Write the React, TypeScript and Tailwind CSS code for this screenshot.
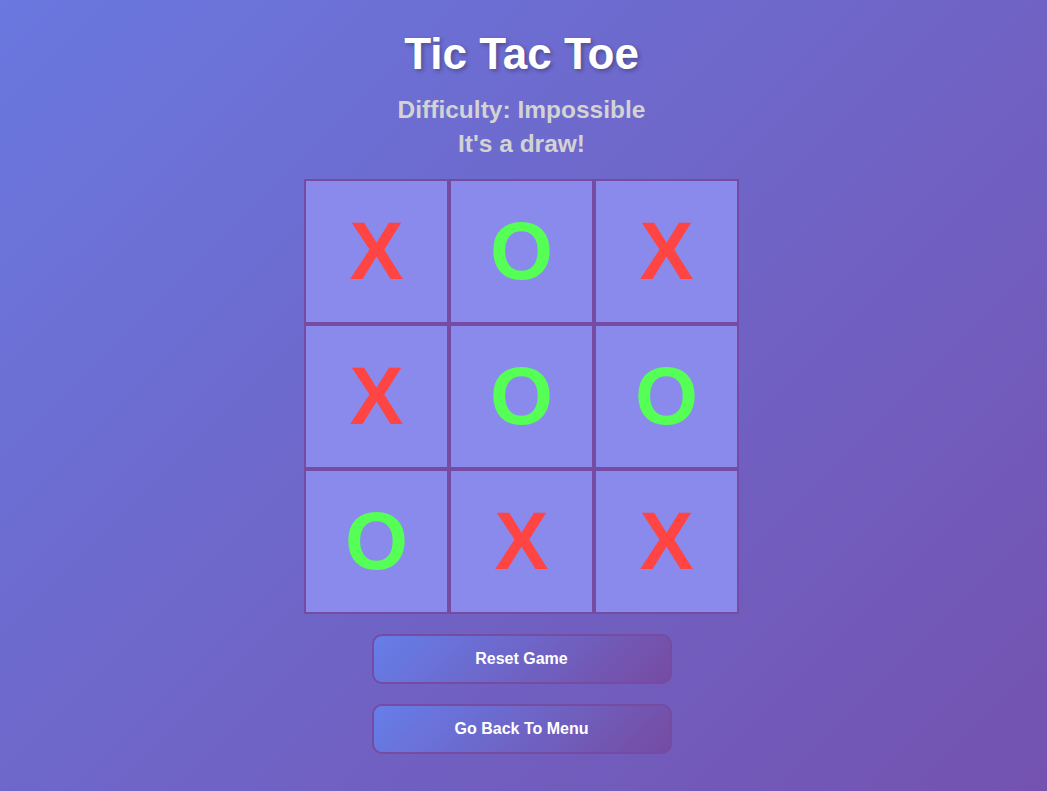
import React from 'react';

const board = ['X', 'O', 'X', 'X', 'O', 'O', 'O', 'X', 'X'];

function Cell({ value }: { value: string }) {
    return (
        <div className="w-[145px] h-[145px] border-2 border-[#764ba2] bg-[#8a8aed] flex items-center justify-center">
            <span
                className={`text-[81px] font-bold leading-none ${value === 'X' ? 'text-[#ff4444]' : 'text-[#55ff55]'}`}
            >
                {value}
            </span>
        </div>
    );
}

export default function App() {
    return (
        <div
            className="min-h-screen w-full bg-[linear-gradient(135deg,#6a78df_0%,#7452b0_100%)] flex flex-col items-center pt-[30px] pr-[4px]"
            style={{ fontFamily: '"Liberation Sans", Arial, sans-serif' }}
        >
            <h1 className="text-[44px] leading-[48px] font-bold text-white [text-shadow:2px_2px_4px_rgba(0,0,0,0.3)]">
                Tic Tac Toe
            </h1>
            <div className="mt-[15px] text-center text-[24.5px] leading-[34px] font-bold text-[#d3d3d3]">
                <p>Difficulty: Impossible</p>
                <p>It's a draw!</p>
            </div>

            <div className="mt-[18px] grid grid-cols-3 w-[435px]">
                {board.map((v, i) => (
                    <Cell key={i} value={v} />
                ))}
            </div>

            <div className="mt-[20px] flex flex-col gap-[20px]">
                <button className="w-[300px] h-[50px] rounded-[10px] border-2 border-[#764ba2] bg-[linear-gradient(135deg,#667eea,#764ba2)] text-white text-[16px] font-bold">
                    Reset Game
                </button>
                <button className="w-[300px] h-[50px] rounded-[10px] border-2 border-[#764ba2] bg-[linear-gradient(135deg,#667eea,#764ba2)] text-white text-[16px] font-bold">
                    Go Back To Menu
                </button>
            </div>
        </div>
    );
}
